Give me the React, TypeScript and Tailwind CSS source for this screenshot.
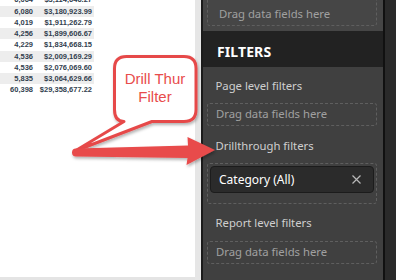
import React from "react";

const rows: [string, string, boolean][] = [
  ["6,064", "$3,114,646.27", false],
  ["6,080", "$3,180,923.99", true],
  ["4,019", "$1,911,262.79", false],
  ["4,256", "$1,899,606.67", true],
  ["4,229", "$1,834,668.15", false],
  ["4,536", "$2,009,169.29", true],
  ["4,536", "$2,076,069.60", false],
  ["5,835", "$3,064,629.66", true],
  ["60,398", "$29,358,677.22", false],
];

function DashBox({ children, className = "" }: { children?: React.ReactNode; className?: string }) {
  return (
    <div className={`ml-[4px] w-[170px] rounded-[3px] border border-dashed border-[#5f5f5f] ${className}`}>
      {children}
    </div>
  );
}

export default function App() {
  return (
    <div
      className="relative flex h-[280px] w-[396px] overflow-hidden bg-white"
      style={{ fontFamily: '"Noto Sans", "Open Sans", sans-serif' }}
    >
      {/* left report canvas */}
      <div className="flex w-[201px] shrink-0">
        <div className="flex w-[195px] flex-col">
          <div className="flex-1 overflow-hidden">
            <div
              className="mt-[-5.6px] flex flex-col text-[7.5px] font-bold text-[#333f4f]"
              style={{ fontFamily: '"Liberation Sans", Arial, sans-serif' }}
            >
              {rows.map(([a, b, s], i) => (
                <div
                  key={i}
                  className={`flex h-[11.25px] w-[94px] items-center ${s ? "bg-[#ededed]" : ""}`}
                >
                  <span className="w-[33px] text-right">{a}</span>
                  <span className="w-[59px] text-right">{b}</span>
                </div>
              ))}
            </div>
          </div>
          <div className="h-[3px] bg-[#e4e4e4]" />
        </div>
        <div className="w-[6px] bg-[#e6e6e6]" />
      </div>
      <div className="w-[2px] shrink-0 bg-[#1b1b1b]" />

      {/* filters pane */}
      <div className="flex w-[180px] shrink-0 flex-col bg-[#404040]">
        <div className="h-[31px] overflow-hidden bg-[#464646]">
          <DashBox className="mt-[-11px] h-[37px]">
            <div className="flex h-[35px] items-end pb-[4px] pl-[11px] text-[11.3px] leading-[14px] text-[#a0a0a0]">
              Drag data fields here
            </div>
          </DashBox>
        </div>
        <div className="flex h-[36px] items-center bg-[#222222] pl-[14px] pt-[5px] text-[14px] font-bold tracking-[0.1px] text-white">
          FILTERS
        </div>
        <div className="mt-[9px] h-[20px] pl-[12.5px] text-[11.3px] leading-[20px] text-[#cfcfcf]">
          Page level filters
        </div>
        <DashBox className="mt-[7px] flex h-[23px] items-center pl-[8px] text-[11.3px] text-[#a0a0a0]">
          Drag data fields here
        </DashBox>
        <div className="mt-[10px] h-[20px] pl-[12.5px] text-[11.3px] leading-[20px] text-[#cfcfcf]">
          Drillthrough filters
        </div>
        <DashBox className="mt-[7px] h-[41px] px-[2px] pt-[2px]">
          <div className="flex h-[27px] items-center justify-between rounded-[4px] border border-[#1c1c1c] bg-[#2b2b2b] pl-[8px] pr-[12px]">
            <span className="text-[12px] text-white">Category (All)</span>
            <svg width="9" height="9" viewBox="0 0 9 9" className="text-[#b8b8b8]">
              <path d="M0.5 0.5 L8.5 8.5 M8.5 0.5 L0.5 8.5" stroke="currentColor" strokeWidth="1.2" fill="none" />
            </svg>
          </div>
        </DashBox>
        <div className="mt-[9px] h-[20px] pl-[12.5px] text-[11.3px] leading-[20px] text-[#cfcfcf]">
          Report level filters
        </div>
        <DashBox className="mt-[8px] flex h-[23px] items-center pl-[8px] text-[11.3px] text-[#a0a0a0]">
          Drag data fields here
        </DashBox>
      </div>
      <div className="w-[2px] shrink-0 bg-[#111111]" />
      <div className="flex-1 bg-[#2a2a2a]" />

      {/* annotation overlay */}
      <svg
        className="pointer-events-none absolute left-0 top-0"
        width="396"
        height="280"
        viewBox="0 0 396 280"
      >
        <defs>
          <filter id="sh" x="-20%" y="-20%" width="140%" height="140%">
            <feDropShadow dx="1" dy="2" stdDeviation="1.5" floodColor="#000" floodOpacity="0.3" />
          </filter>
        </defs>
        <path
          d="M126.5 56.5 H184 Q196 56.5 196 68.5 V109.5 Q196 121.5 184 121.5 H152 L75 151 L124 121.5 Q114.5 121.5 114.5 109.5 V68.5 Q114.5 56.5 126.5 56.5 Z"
          fill="#ffffff"
          stroke="#e64a4a"
          strokeWidth="3"
          strokeLinejoin="round"
          filter="url(#sh)"
        />
        <path
          d="M76 148.5 L188 145.5 L187.5 137 L215 150 L186.5 165 L187.5 158 L76 156.5 A4 4 0 0 1 76 148.5 Z"
          fill="#e84b4b"
          filter="url(#sh)"
        />
      </svg>
      <div
        className="absolute left-[114px] top-[70px] w-[82px] text-center text-[15px] leading-[18px] text-[#e84c4c]"
        style={{ fontFamily: '"Liberation Sans", Arial, sans-serif' }}
      >
        Drill Thur
        <br />
        Filter
      </div>
    </div>
  );
}
